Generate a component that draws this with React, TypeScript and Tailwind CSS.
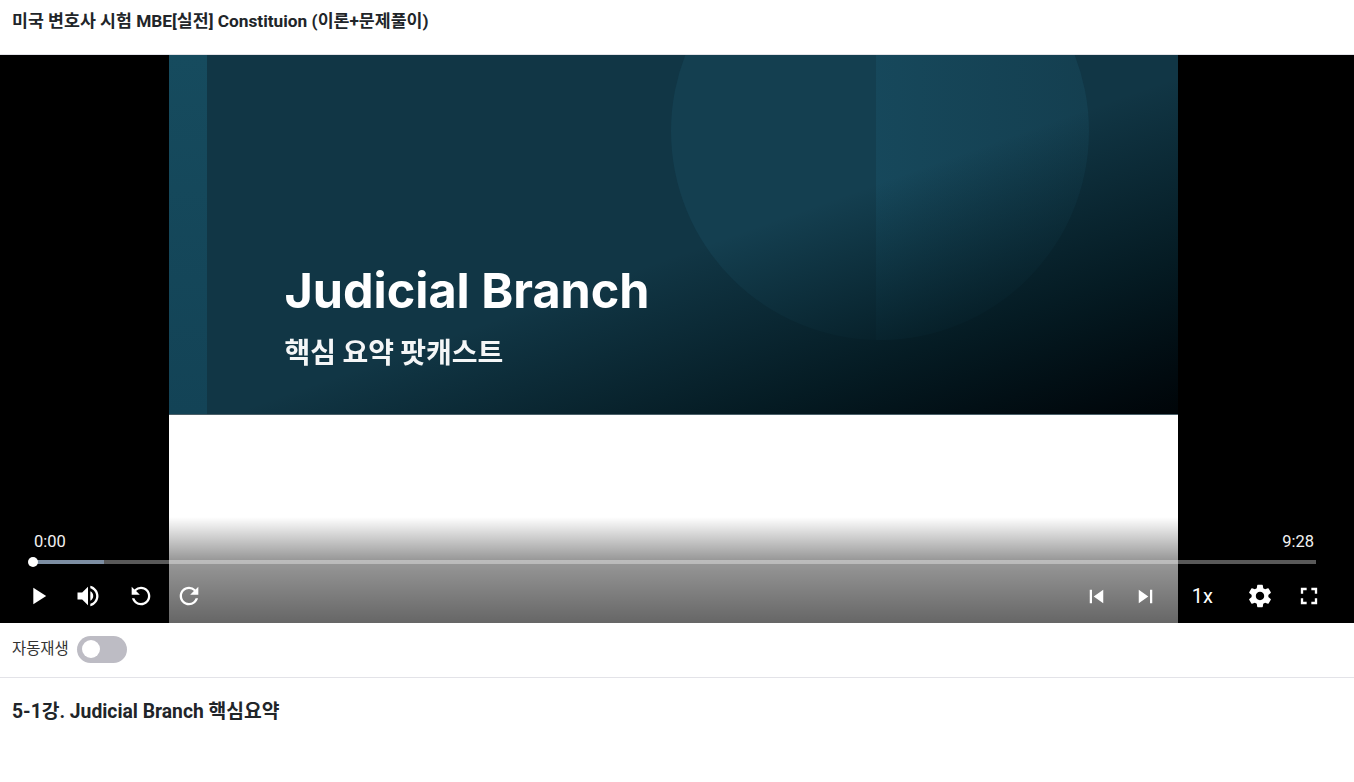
import {
  MdPlayArrow,
  MdVolumeUp,
  MdRefresh,
  MdSkipPrevious,
  MdSkipNext,
  MdSettings,
  MdFullscreen,
} from "react-icons/md";

const fontStack = "font-['Roboto','Noto_Sans_CJK_KR',sans-serif]";

const Slide = () => {
  return (
    <div className="w-[1009px] h-full mr-[8px] bg-white flex flex-col">
      <div className="relative h-[360px] overflow-hidden bg-[#113645] border-b border-b-[#4a5f68]">
        <div className="absolute inset-y-0 left-0 w-[38px] bg-gradient-to-b from-[#164b5e] to-[#134356]" />
        <div className="absolute left-[502px] top-[-133px] w-[418px] h-[418px] rounded-full overflow-hidden bg-[#143f50]">
          <div className="absolute left-[205px] inset-y-0 w-[213px] bg-gradient-to-r from-[#174a5e]/80 to-transparent" />
        </div>
        <div className="absolute inset-0 bg-gradient-to-br from-transparent from-[53%] via-[#03171e]/85 via-[78%] to-[#000508]" />
        <div className="absolute left-[116px] top-[204px] blur-[0.5px]">
          <div className="font-['Inter',sans-serif] font-bold text-[48.5px] leading-[64px] text-white">
            Judicial Branch
          </div>
          <div className="font-['Noto_Sans_CJK_KR',sans-serif] font-bold text-[28px] leading-[40px] mt-[8px] text-[#f4f6f7]">
            핵심 요약 팟캐스트
          </div>
        </div>
      </div>
    </div>
  );
};

const PlayerControls = () => {
  return (
    <div className={`absolute inset-x-0 bottom-0 h-[106px] bg-gradient-to-b from-transparent via-black/40 via-[40%] to-black/60 text-white ${fontStack}`}>
      <div className="flex justify-between pl-[34px] pr-[40px] pt-[15px] text-[16.5px] leading-[20px] text-[#f2f2f2]">
        <span>0:00</span>
        <span>9:28</span>
      </div>
      <div className="relative ml-[33px] mr-[38px] mt-[8px] h-[4px] bg-white/35">
        <div className="absolute inset-y-0 left-0 w-[71px] bg-[#7d8ea3]" />
        <div className="absolute left-[-5px] top-[-3px] w-[10px] h-[10px] rounded-full bg-white" />
      </div>
      <div className="flex items-center h-[28px] mt-[18px] pl-[24px] pr-[31px]">
        <MdPlayArrow size={28} />
        <MdVolumeUp size={28} className="ml-[22px]" />
        <MdRefresh size={28} className="ml-[25px] -scale-x-100" />
        <MdRefresh size={28} className="ml-[20px]" />
        <div className="ml-auto flex items-center">
          <MdSkipPrevious size={27} />
          <MdSkipNext size={27} className="ml-[22px]" />
          <span className="ml-[33px] text-[20px] leading-[28px]">1x</span>
          <MdSettings size={28} className="ml-[33px]" />
          <MdFullscreen size={28} className="ml-[21px]" />
        </div>
      </div>
    </div>
  );
};

const App = () => {
  return (
    <div className={`min-h-[782px] bg-white text-[#212529] ${fontStack}`}>
      <div className="h-[55px] px-3 pt-[9px] border-b border-[#e3e3e8]">
        <h1 className="text-[17.3px] font-bold leading-6">
          미국 변호사 시험 MBE[실전] Constituion (이론+문제풀이)
        </h1>
      </div>

      <div className="relative h-[568px] bg-black flex justify-center">
        <Slide />
        <PlayerControls />
      </div>

      <div className="h-[55px] px-3 flex items-center gap-2 border-b border-[#e3e3e8] pb-[2px]">
        <span className="text-[15.4px] text-[#333333] pt-[2px]">자동재생</span>
        <div className="w-[50px] h-[27px] rounded-full bg-[#bdbcc4] flex items-center pl-[5px]">
          <div className="w-[18px] h-[18px] rounded-full bg-white" />
        </div>
      </div>

      <div className="px-3 pt-[20px]">
        <h2 className="text-[19.3px] font-bold leading-[27px]">5-1강. Judicial Branch 핵심요약</h2>
      </div>
    </div>
  );
};

export default App;
